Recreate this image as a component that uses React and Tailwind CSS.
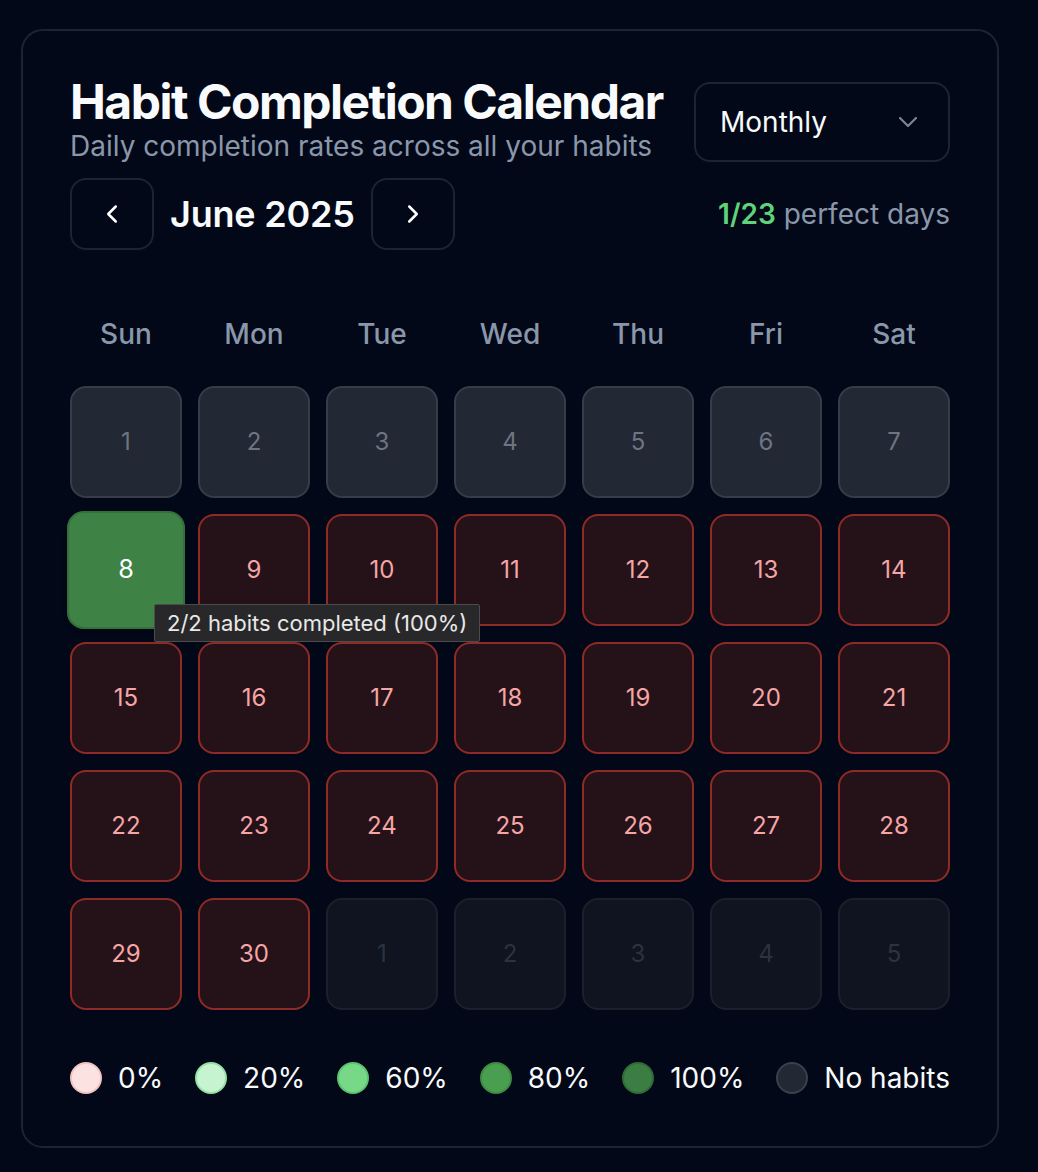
import React from 'react';
import { ChevronDown, ChevronLeft, ChevronRight } from 'lucide-react';

const days = ['Sun', 'Mon', 'Tue', 'Wed', 'Thu', 'Fri', 'Sat'];

const legend = [
    { label: '0%', cls: 'bg-[#fde2e2] border-[#f5c2c2]' },
    { label: '20%', cls: 'bg-[#c6f3d0] border-[#93e2a4]' },
    { label: '60%', cls: 'bg-[#77d987] border-[#5cc46d]' },
    { label: '80%', cls: 'bg-[#4a9e50] border-[#3d8a43]' },
    { label: '100%', cls: 'bg-[#3b7d43] border-[#306b37]' },
    { label: 'No habits', cls: 'bg-[#222834] border-[#3a404c]' },
];

function buildCells() {
    const cells = [];
    for (let d = 1; d <= 7; d++) cells.push({ n: d, kind: 'none' });
    for (let d = 8; d <= 30; d++) cells.push({ n: d, kind: d === 8 ? 'full' : 'zero' });
    for (let d = 1; d <= 5; d++) cells.push({ n: d, kind: 'outside' });
    return cells;
}

const cellStyles = {
    none: 'bg-[#222834] border-[#363c48] text-[#6e7481]',
    zero: 'bg-[#251118] border-[#8e2b26] text-[#f4a5a5]',
    full: 'bg-[#3f8245] border-[#356f3b] text-white scale-[1.054] shadow-md',
    outside: 'bg-[#0f1420] border-[#1b202b] text-[#2c323e]',
};

export default function App() {
    const cells = buildCells();

    return (
        <div className="min-h-[1172px] bg-[#020817] pt-[29px] font-['Inter','Noto_Sans',sans-serif]">
            <div className="ml-[21px] w-[978px] rounded-[22px] border-2 border-[#1c2333] px-[47px] pt-[47px] pb-[48px]">
                
                <div className="flex items-start justify-between">
                    <div>
                        <h1 className="text-[48px] font-bold leading-none tracking-[-1.5px] text-[#f8fafc]">Habit Completion Calendar</h1>
                        <p className="text-[28px] leading-[40px] text-[#8a97ab]">Daily completion rates across all your habits</p>
                    </div>
                    <button className="mt-[4px] flex h-[80px] w-[256px] items-center justify-between rounded-[16px] border-2 border-[#1c2333] px-[24px] text-[28px] text-[#f8fafc]">
                        <span>Monthly</span>
                        <ChevronDown size={32} strokeWidth={1.6} className="text-[#7c8595]" />
                    </button>
                </div>

                
                <div className="mt-[12px] flex items-center justify-between">
                    <div className="flex items-center gap-[16px]">
                        <button className="flex h-[72px] w-[84px] items-center justify-center rounded-[16px] border-2 border-[#1c2333] text-white">
                            <ChevronLeft size={30} strokeWidth={2} />
                        </button>
                        <span className="text-[36px] font-semibold tracking-[-0.2px] text-[#f8fafc]">June 2025</span>
                        <button className="flex h-[72px] w-[84px] items-center justify-center rounded-[16px] border-2 border-[#1c2333] text-white">
                            <ChevronRight size={30} strokeWidth={2} />
                        </button>
                    </div>
                    <div className="text-[28px] leading-[40px] text-[#8a97ab]">
                        <span className="font-semibold text-[#5fd37a]">1/23</span> perfect days
                    </div>
                </div>

                
                <div className="mt-[64px] grid grid-cols-7 gap-x-[16px]">
                    {days.map((d) => (
                        <div key={d} className="text-center text-[28px] font-medium leading-[40px] text-[#8a97ab]">{d}</div>
                    ))}
                </div>

                <div className="mt-[32px] grid grid-cols-7 gap-[16px]">
                    {cells.map((c, i) => (
                        <div key={i} className="relative">
                            <div className={`flex h-[112px] items-center justify-center rounded-[16px] border-2 text-[24px] ${cellStyles[c.kind]}`}>
                                {c.n}
                            </div>
                            {c.kind === 'full' && (
                                <div className="absolute left-[84px] top-[90px] z-10 whitespace-nowrap rounded-[2px] border border-[#4b4b4d] bg-[#28282a] px-[12px] py-[4px] text-[22px] leading-[28px] text-[#e8e8e8]">
                                    2/2 habits completed (100%)
                                </div>
                            )}
                        </div>
                    ))}
                </div>

                
                <div className="mt-[48px] flex items-center justify-between">
                    {legend.map((l) => (
                        <div key={l.label} className="flex items-center gap-[16px]">
                            <span className={`h-[32px] w-[32px] rounded-full border-2 ${l.cls}`}></span>
                            <span className="text-[28px] leading-[40px] text-[#f8fafc]">{l.label}</span>
                        </div>
                    ))}
                </div>
            </div>
        </div>
    );
}
